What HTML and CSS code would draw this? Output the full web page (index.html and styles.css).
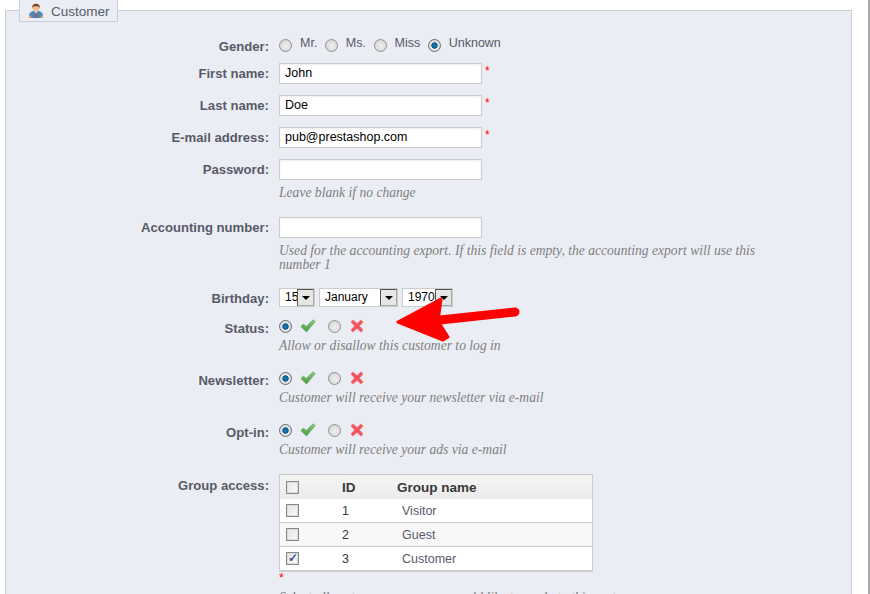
FILE: index.html
```html
<!DOCTYPE html>
<html lang="en">
<head>
  <meta charset="UTF-8" />
  <title>Customer</title>
  <link rel="stylesheet" href="styles.css">
</head>
<body>
  <div class="page">
    <div class="panel">
      <div class="legend">
        <svg class="legend-icon" width="16" height="16" viewBox="0 0 16 16">
          <path d="M1 15v-2.500c0-2.500 2-4 4.500-4.500h5c2.500.5 4.500 2 4.500 4.500V15z" fill="#4a86b8"/>
          <path d="M1 15v-2l2-1 .5 3zM15 15v-2l-2-1-.5 3z" fill="#e8a15c"/>
          <path d="M6.500 8l1.500 3 1.500-3z" fill="#e9eef2"/>
          <path d="M7.500 10h1l.4 4H7.100z" fill="#c0453a"/>
          <circle cx="8" cy="5" r="3.600" fill="#eebf95"/>
          <path d="M4.200 5C4 2 6 .8 8 .8S12 2 11.800 5C11 3.600 9.500 3.300 8 3.300S5 3.600 4.200 5z" fill="#7a4322"/>
        </svg>
        <span class="legend-text">Customer</span>
      </div>

      <div class="row row-gender">
        <label>Gender:</label>
        <div class="field inline">
          <span class="radio"></span><span class="opt">Mr.</span>
          <span class="radio"></span><span class="opt">Ms.</span>
          <span class="radio"></span><span class="opt">Miss</span>
          <span class="radio on"></span><span class="opt">Unknown</span>
        </div>
      </div>
      <div class="row">
        <label>First name:</label>
        <div class="field"><div class="input">John</div><span class="req">*</span></div>
      </div>
      <div class="row">
        <label>Last name:</label>
        <div class="field"><div class="input">Doe</div><span class="req">*</span></div>
      </div>
      <div class="row">
        <label>E-mail address:</label>
        <div class="field"><div class="input">pub@prestashop.com</div><span class="req">*</span></div>
      </div>
      <div class="row row-hint">
        <label>Password:</label>
        <div class="field"><div class="input"></div></div>
        <p class="hint">Leave blank if no change</p>
      </div>
      <div class="row row-account">
        <label>Accounting number:</label>
        <div class="field"><div class="input"></div></div>
        <p class="hint">Used for the accounting export. If this field is empty, the accounting export will use this number 1</p>
      </div>
      <div class="row row-birthday">
        <label>Birthday:</label>
        <div class="field selects">
          <div class="select s-day">15<span class="drop"></span></div>
          <div class="select s-month">January<span class="drop"></span></div>
          <div class="select s-year">1970<span class="drop"></span></div>
        </div>
      </div>
      <div class="row row-toggle">
        <label>Status:</label>
        <div class="field toggle">
          <span class="radio on"></span>
          <svg class="ok" width="16" height="14" viewBox="0 0 16 14"><use href="#tick"/></svg>
          <span class="radio"></span>
          <svg class="no" width="14" height="14" viewBox="0 0 14 14"><use href="#cross"/></svg>
        </div>
        <p class="hint">Allow or disallow this customer to log in</p>
      </div>
      <div class="row row-toggle">
        <label>Newsletter:</label>
        <div class="field toggle">
          <span class="radio on"></span>
          <svg class="ok" width="16" height="14" viewBox="0 0 16 14"><use href="#tick"/></svg>
          <span class="radio"></span>
          <svg class="no" width="14" height="14" viewBox="0 0 14 14"><use href="#cross"/></svg>
        </div>
        <p class="hint">Customer will receive your newsletter via e-mail</p>
      </div>
      <div class="row row-toggle">
        <label>Opt-in:</label>
        <div class="field toggle">
          <span class="radio on"></span>
          <svg class="ok" width="16" height="14" viewBox="0 0 16 14"><use href="#tick"/></svg>
          <span class="radio"></span>
          <svg class="no" width="14" height="14" viewBox="0 0 14 14"><use href="#cross"/></svg>
        </div>
        <p class="hint">Customer will receive your ads via e-mail</p>
      </div>
      <div class="row row-groups">
        <label>Group access:</label>
        <div class="field-block">
          <table class="groups">
            <thead>
              <tr><th class="c-check"><span class="check"></span></th><th class="c-id">ID</th><th>Group name</th></tr>
            </thead>
            <tbody>
              <tr><td class="c-check"><span class="check"></span></td><td class="c-id">1</td><td class="c-name">Visitor</td></tr>
              <tr class="alt"><td class="c-check"><span class="check"></span></td><td class="c-id">2</td><td class="c-name">Guest</td></tr>
              <tr><td class="c-check"><span class="check on">&#10003;</span></td><td class="c-id">3</td><td class="c-name">Customer</td></tr>
            </tbody>
          </table>
          <span class="req req-below">*</span>
          <p class="hint">Select all customer groups you would like to apply to this customer</p>
        </div>
      </div>
    </div>

    <!-- arrow drawn over the form -->
    <svg class="arrow" width="130" height="60" viewBox="0 0 130 60">
      <path d="M120 16L45 24" stroke="#f00" stroke-width="9" stroke-linecap="round" fill="none"/>
      <path d="M3 26L46 3 43 25 53 41 48 44z" fill="#f00" stroke="#f00" stroke-width="3" stroke-linejoin="round"/>
    </svg>
  </div>

  <svg class="defs" width="0" height="0">
    <defs>
      <linearGradient id="tick-fill" x1="0" y1="0" x2="0" y2="1">
        <stop offset="0" stop-color="#86d078"/>
        <stop offset="1" stop-color="#46983f"/>
      </linearGradient>
      <path id="tick" d="M.8 7.500L3.500 5 6.200 7.500 13 .8 15.300 2.500 6.500 13z" fill="url(#tick-fill)" stroke="#4c9a46" stroke-width=".5"/>
      <path id="cross" d="M.8 3L3 .8 7 4.400 11 .8 13.200 3 9.600 7 13.200 11 11 13.200 7 9.600 3 13.200 .8 11 4.400 7z" fill="#f4555c" stroke="#f08a8e" stroke-width=".5"/>
    </defs>
  </svg>
</body>
</html>
```

FILE: styles.css
```css
html, body {
  margin: 0;
  height: 594px;
  overflow: hidden;
  background: #fff;
}
body {
  font-family: 'Liberation Sans', Arial, sans-serif;
  font-size: 12px;
  color: #585a69;
}
.page {
  position: relative;
  width: 868px;
  height: 584px;
  overflow: hidden;
  border-right: 2px solid #a9a9a9;
  padding-top: 10px;
}
.panel {
  margin-left: 5px;
  width: 845px;
  height: 700px;
  background: #ebedf4;
  border: 1px solid #ccced7;
  position: relative;
  padding-top: 25px;
}
.legend {
  position: absolute;
  top: -11px;
  left: 13px;
  width: 99px;
  height: 22px;
  box-sizing: border-box;
  background: #ebedf4;
  border: 1px solid #ccced7;
  border-top: none;
  display: flex;
  align-items: center;
  font-size: 13.5px;
  padding: 0 0 0 8px;
  gap: 7px;
}
.legend-icon {
  flex: none;
}
.legend-text {
  padding-top: 1px;
}
.row {
  display: grid;
  grid-template-columns: 263px 1fr;
  column-gap: 10px;
  margin-bottom: 11px;
}
label {
  text-align: right;
  font-weight: bold;
  font-size: 13.1px;
  line-height: 21px;
}
.field {
  display: flex;
  align-items: flex-start;
}
.input {
  width: 203px;
  height: 21px;
  box-sizing: border-box;
  background: #fff;
  border: 1px solid #ccc;
  box-shadow: inset 0 1px 2px #eee;
  color: #000;
  font-size: 12.5px;
  line-height: 19px;
  padding-left: 5px;
}
.req {
  color: #f00;
  margin: 1px 0 0 3px;
  font-size: 12px;
  line-height: 14px;
}
.row-gender {
  margin-bottom: 6px;
}
.inline {
  align-items: center;
  height: 19px;
}
.opt {
  margin: -5px 7.5px 0 8px;
  font-size: 12.5px;
}
.radio {
  flex: none;
  width: 13px;
  height: 13px;
  border-radius: 50%;
  box-sizing: border-box;
  border: 1px solid #8f8f8f;
  background: radial-gradient(circle at 55% 55%, #f0f0f0, #cfcfcf);
  display: inline-block;
}
.radio.on {
  background: radial-gradient(circle, #1b83bd 0, #0a5a8c 36%, #e6e8ea 46%, #cfcfcf 100%);
  border-color: #6a6a6a;
}
.hint {
  grid-column: 2;
  margin: 6px 0 0;
  width: 490px;
  font-family: 'Liberation Serif', serif;
  font-style: italic;
  font-size: 13.6px;
  line-height: 14px;
  color: #7f7f7f;
}
.row-hint {
  margin-bottom: 17px;
}
.row-account {
  margin-bottom: 16px;
}
.row-birthday {
  margin-bottom: 9px;
}
.selects {
  gap: 4px;
}
.select {
  height: 19px;
  box-sizing: border-box;
  background: #fff;
  border: 1px solid #ccc;
  color: #000;
  line-height: 17px;
  padding-left: 5px;
  position: relative;
  overflow: hidden;
}
.s-day { width: 36px; }
.s-month { width: 79px; }
.s-year { width: 51px; }
.drop {
  position: absolute;
  right: 0;
  top: 0;
  width: 17px;
  height: 17px;
  box-sizing: border-box;
  background: #e6e6e6;
  border: 1px solid;
  border-color: #555 #aaa #aaa #555;
}
.drop::after {
  content: "";
  position: absolute;
  left: 4px;
  top: 6px;
  border: 4px solid transparent;
  border-top-color: #000;
  border-bottom: none;
}
.toggle {
  align-items: center;
  height: 14px;
  margin-top: 1px;
}
.toggle .ok {
  margin-left: 8px;
}
.toggle .radio:nth-of-type(2) {
  margin-left: 12px;
}
.toggle .no {
  margin-left: 9px;
}
.row-toggle {
  margin-bottom: 17px;
}
.row-toggle .hint {
  margin-top: 0;
}
.row-groups label {
  line-height: 24px;
}
.field-block {
  width: 500px;
}
.groups {
  width: 314px;
  border-collapse: collapse;
  background: #fff;
  border: 1px solid #ccc;
  border-bottom-width: 2px;
  font-size: 12.5px;
}
.groups th {
  height: 24px;
  padding: 0;
  text-align: left;
  font-size: 13.5px;
  color: #383838;
  background: linear-gradient(#f5f5f5, #ebebeb);
}
.groups td {
  height: 23px;
  padding: 0;
  border-top: 1px solid #ccc;
  color: #585a69;
}
.groups tbody tr:first-child td {
  border-top: none;
}
.groups tr.alt td {
  background: #f8f8f8;
}
.c-check {
  width: 56px;
  padding-left: 6px !important;
}
.groups .c-id {
  width: 55px;
  color: #383838;
}
.c-name {
  padding-left: 5px !important;
}
.check {
  display: block;
  width: 13px;
  height: 13px;
  box-sizing: border-box;
  border: 1px solid #888;
  box-shadow: inset 0 0 0 1px #ddd;
  background: linear-gradient(135deg, #e4e4e4, #fbfbfb);
  color: #3d4f99;
  font-size: 12px;
  line-height: 11px;
  text-align: center;
  font-weight: bold;
}
.req-below {
  display: block;
  margin: 0;
  line-height: 12px;
}
.field-block .hint {
  margin-top: 7px;
}
.arrow {
  position: absolute;
  left: 395px;
  top: 296px;
}
.defs {
  position: absolute;
}
```
